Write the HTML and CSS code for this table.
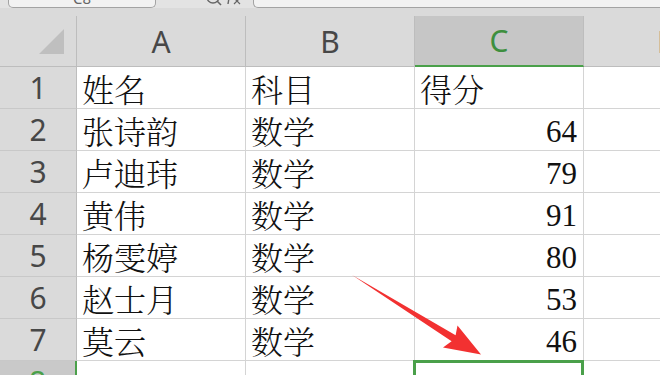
FILE: index.html
```html
<!DOCTYPE html>
<html lang="zh-CN">
<head>
<meta charset="utf-8">
<title>表格</title>
<link rel="stylesheet" href="styles.css">
</head>
<body>
<div class="app">
  <div class="toolbar">
    <div class="namebox"><span>C8</span></div>
    <div class="tools">
      <svg width="97" height="8" viewBox="0 0 97 8">
        <circle cx="57" cy="-3" r="6" fill="none" stroke="#666" stroke-width="1.4"/>
        <line x1="61" y1="1" x2="65" y2="5" stroke="#666" stroke-width="1.6"/>
        <path d="M73 -2 L72 4" stroke="#666" stroke-width="1.4" fill="none"/>
        <path d="M78 -2 L84 4 M84 -2 L78 4" stroke="#666" stroke-width="1.2" fill="none"/>
      </svg>
    </div>
    <div class="formula"></div>
  </div>
  <div class="sheet">
    <div class="ch"><div class="ch-in corner"><svg width="25" height="25" viewBox="0 0 25 25"><polygon points="25,0 25,25 0,25" fill="#bfbfbf"/></svg></div></div>
    <div class="ch"><div class="ch-in">A</div></div>
    <div class="ch"><div class="ch-in">B</div></div>
    <div class="ch"><div class="ch-in sel">C</div></div>
    <div class="ch"><div class="ch-in">D</div></div>

    <div class="rh">1</div><div class="cell">姓名</div><div class="cell">科目</div><div class="cell">得分</div><div class="cell"></div>
    <div class="rh">2</div><div class="cell">张诗韵</div><div class="cell">数学</div><div class="cell num"><span class="n" lang="en">64</span></div><div class="cell"></div>
    <div class="rh">3</div><div class="cell">卢迪玮</div><div class="cell">数学</div><div class="cell num"><span class="n" lang="en">79</span></div><div class="cell"></div>
    <div class="rh">4</div><div class="cell">黄伟</div><div class="cell">数学</div><div class="cell num"><span class="n" lang="en">91</span></div><div class="cell"></div>
    <div class="rh">5</div><div class="cell">杨雯婷</div><div class="cell">数学</div><div class="cell num"><span class="n" lang="en">80</span></div><div class="cell"></div>
    <div class="rh">6</div><div class="cell">赵士月</div><div class="cell">数学</div><div class="cell num"><span class="n" lang="en">53</span></div><div class="cell"></div>
    <div class="rh">7</div><div class="cell">莫云</div><div class="cell">数学</div><div class="cell num"><span class="n" lang="en">46</span></div><div class="cell"></div>
    <div class="rh sel">8</div><div class="cell"></div><div class="cell"></div><div class="cell active"></div><div class="cell"></div>
  </div>
  <svg class="arrow" width="660" height="375" viewBox="0 0 660 375">
    <polygon points="352,275 455.6,335.2 457.5,325.5 481,354.5 443,347.5 451.6,341.3" fill="#f23131"/>
  </svg>
</div>
</body>
</html>
```

FILE: styles.css
```css
html, body {
  margin: 0;
  padding: 0;
}
body {
  width: 660px;
  height: 375px;
  overflow: hidden;
  background: #fff;
  font-family: "Noto Sans", "Liberation Sans", sans-serif;
}
.app {
  position: relative;
  width: 660px;
  height: 375px;
  overflow: hidden;
}
.toolbar {
  height: 8px;
  background: #e3e3e3;
  display: flex;
}
.namebox {
  margin-left: 8px;
  width: 148px;
  height: 8px;
  box-sizing: border-box;
  background: #f2f2f2;
  border: 1px solid #a3a3a3;
  border-top: none;
  border-radius: 0 0 5px 5px;
  overflow: hidden;
  text-align: center;
  font-size: 15px;
  line-height: 15px;
  color: #666;
}
.namebox span {
  display: block;
  margin-top: -9px;
}
.tools {
  width: 97px;
  height: 8px;
  overflow: hidden;
}
.tools svg {
  display: block;
}
.formula {
  flex: 1;
  height: 8px;
  box-sizing: border-box;
  background: #f2f2f2;
  border: 1px solid #a3a3a3;
  border-top: none;
  border-right: none;
  border-radius: 0 0 0 5px;
}
.sheet {
  display: grid;
  grid-template-columns: 77px 169px 169px 169px 169px;
  grid-template-rows: 59px repeat(7, 42px) 42px;
  background: #dadada;
  width: 753px;
}
.ch {
  display: flex;
  flex-direction: column;
  justify-content: flex-end;
  background: #dadada;
}
.ch-in {
  height: 51px;
  box-sizing: border-box;
  border-right: 1px solid #bdbdbd;
  border-bottom: 1px solid #bdbdbd;
  display: flex;
  align-items: center;
  justify-content: center;
  font-size: 30px;
  color: #474747;
}
.ch-in.corner {
  justify-content: flex-end;
  align-items: flex-end;
  padding: 0 12px 12px 0;
}
.ch-in.sel {
  background: #c6c6c6;
  color: #3e8f3e;
  border-bottom: 2px solid #4aa04a;
}
.rh {
  background: #dadada;
  border-right: 1px solid #bdbdbd;
  border-bottom: 1px solid #c8c8c8;
  box-sizing: border-box;
  display: flex;
  align-items: center;
  justify-content: center;
  font-size: 30px;
  color: #474747;
}
.rh.sel {
  background: #c9c9c9;
  border-right: 2px solid #4aa04a;
  color: #4aa04a;
  align-items: flex-start;
}
.cell {
  background: #fff;
  border-right: 1px solid #d4d4d4;
  border-bottom: 1px solid #d4d4d4;
  box-sizing: border-box;
  display: flex;
  align-items: center;
  padding: 0 6px 0 5px;
  font-family: "Noto Serif CJK SC", "Noto Sans CJK SC", sans-serif;
  font-weight: 300;
  font-size: 32px;
  color: #111;
}
.cell.num {
  justify-content: flex-end;
}
.n {
  font-family: "Liberation Serif", "Times New Roman", Tinos, "Nimbus Roman", "Nimbus Roman No9 L", "TeX Gyre Termes", FreeSerif, "Noto Serif", "DejaVu Serif", serif;
  font-weight: 400;
  font-size: 31px;
  line-height: 1;
  padding-top: 4px;
}
.cell.active {
  position: relative;
}
.cell.active::after {
  content: "";
  position: absolute;
  left: -2px;
  right: -1px;
  top: -1px;
  height: 40px;
  border: 3px solid #4aa04a;
}
.arrow {
  position: absolute;
  left: 0;
  top: 0;
  pointer-events: none;
}
```
